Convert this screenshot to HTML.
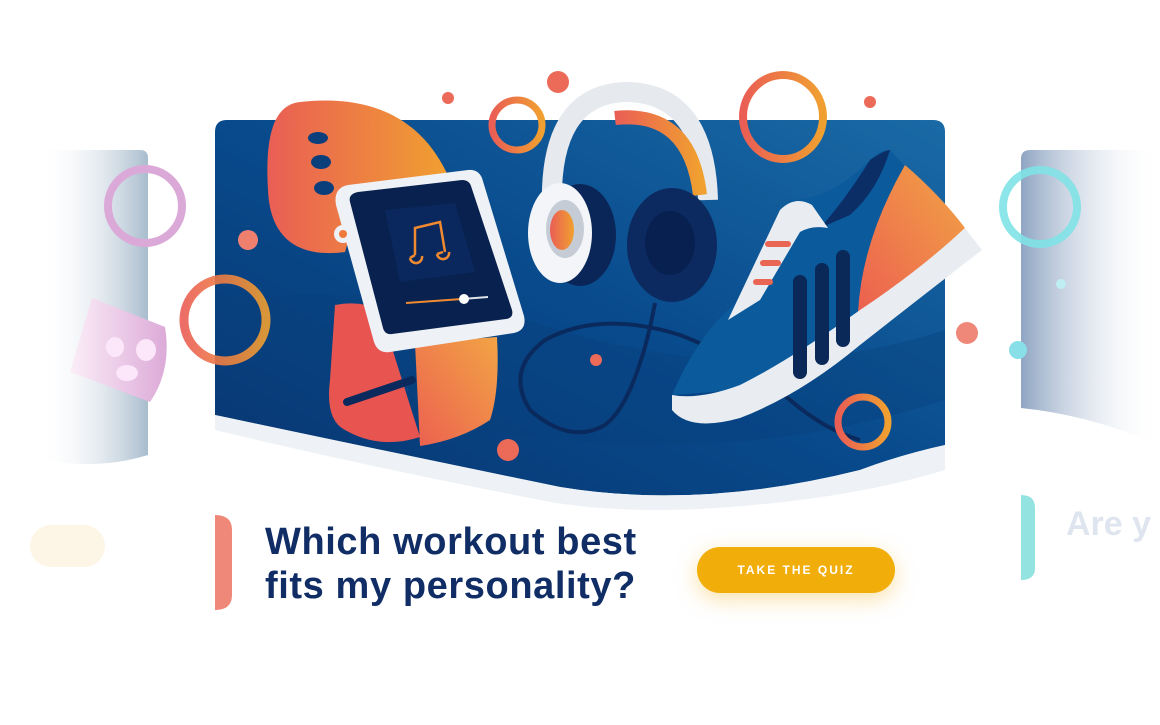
<!DOCTYPE html>
<html><head><meta charset="utf-8"><style>
html,body{margin:0;padding:0;background:#fff;width:1160px;height:725px;overflow:hidden}
svg{position:absolute;left:0;top:0}
.t{position:absolute;left:265px;top:520px;font:bold 38px/44px "Liberation Sans",sans-serif;color:#102d66;letter-spacing:0.6px}
.btn{position:absolute;left:697px;top:547px;width:198px;height:46px;border-radius:23px;background:#f1ad0a;box-shadow:0 6px 22px rgba(241,173,10,.35);color:#fff;font:bold 12px/46px "Liberation Sans",sans-serif;letter-spacing:2px;text-align:center}
.are{position:absolute;left:1066px;top:505px;font:bold 34px "Liberation Sans",sans-serif;color:#dfe5ef}
</style></head><body>
<svg width="1160" height="725" viewBox="0 0 1160 725">
<defs>
<linearGradient id="bg" x1="1" y1="0" x2="0" y2="1"><stop offset="0" stop-color="#1a6aa6"/><stop offset=".5" stop-color="#084a8c"/><stop offset="1" stop-color="#083570"/></linearGradient>
<linearGradient id="og" x1="0" y1="0" x2="1" y2="0"><stop offset="0" stop-color="#ea5e55"/><stop offset="1" stop-color="#f0a030"/></linearGradient>
<linearGradient id="og2" x1="0" y1="1" x2="1" y2="0"><stop offset="0" stop-color="#ec6050"/><stop offset="1" stop-color="#f2a445"/></linearGradient>
<linearGradient id="lg" x1="0" y1="0" x2="1" y2="0"><stop offset="0" stop-color="#fff" stop-opacity="0"/><stop offset="1" stop-color="#a8bccd"/></linearGradient>
<linearGradient id="rg" x1="0" y1="0" x2="1" y2="0"><stop offset="0" stop-color="#8fa5c3"/><stop offset="1" stop-color="#fff" stop-opacity="0"/></linearGradient>
<linearGradient id="pk" x1="0" y1="0" x2="1" y2="0"><stop offset="0" stop-color="#fbeef8"/><stop offset="1" stop-color="#dcaad8"/></linearGradient>
</defs>
<path d="M40,150 H140 Q148,150 148,158 V455 Q100,470 40,460 Z" fill="url(#lg)"/>
<circle cx="145" cy="206" r="37" fill="none" stroke="#dba9d8" stroke-width="8"/>
<path d="M92,298 L165,327 Q172,370 150,402 L70,372 Z" fill="url(#pk)"/>
<ellipse cx="115" cy="347" rx="9" ry="10" fill="#fbe6fa"/><ellipse cx="146" cy="350" rx="10" ry="11" fill="#fbe6fa"/><ellipse cx="127" cy="373" rx="11" ry="8" fill="#fbe6fa"/>
<rect x="30" y="525" width="75" height="42" rx="21" fill="#fdf6e6"/>
<path d="M1030,150 H1160 V445 Q1090,415 1021,408 V159 Q1021,150 1030,150 Z" fill="url(#rg)"/>
<circle cx="1040" cy="207" r="37" fill="none" stroke="#80e2e6" stroke-width="8" opacity=".9"/>
<circle cx="1061" cy="284" r="5" fill="#bfeef2"/>
<circle cx="1018" cy="350" r="9" fill="#88dfe8"/>
<path d="M1021,495 Q1035,495 1035,508 V568 Q1035,580 1021,580 Z" fill="#93e3e0"/>
<path d="M227,120 H933 Q945,120 945,132 V445 Q900,455 860,470 Q700,510 560,487 Q380,450 215,415 V132 Q215,120 227,120 Z" fill="url(#bg)"/>
<path d="M215,300 Q400,280 560,330 Q760,390 945,330 V400 Q760,460 560,440 Q380,420 215,360 Z" fill="#0a3f7c" opacity=".35"/>
<path d="M215,415 Q380,450 560,487 Q700,510 860,470 Q900,455 945,445 V470 Q880,490 800,500 Q640,520 540,500 Q360,465 215,430 Z" fill="#eef1f5"/>
<path d="M215,515 Q232,515 232,530 V595 Q232,610 215,610 Z" fill="#ef8878"/>
<circle cx="225" cy="320" r="41" fill="none" stroke="url(#og)" stroke-width="9" opacity=".9"/>
<circle cx="248" cy="240" r="10" fill="#ef8070"/>
<circle cx="448" cy="98" r="6" fill="#ec6a58"/>
<circle cx="558" cy="82" r="11" fill="#ec6a58"/>
<circle cx="517" cy="125" r="25" fill="none" stroke="url(#og)" stroke-width="7"/>
<ellipse cx="783" cy="117" rx="40" ry="42" fill="none" stroke="url(#og)" stroke-width="8"/>
<circle cx="870" cy="102" r="6" fill="#ec6a58"/>
<circle cx="967" cy="333" r="11" fill="#ef8878"/>
<circle cx="596" cy="360" r="6" fill="#ec6a58"/>
<circle cx="508" cy="450" r="11" fill="#ec6a58"/>
<path d="M655,303 Q648,340 640,363 Q625,410 605,425 Q570,445 530,410 Q505,370 545,340 Q600,310 680,335 Q740,358 790,400 Q825,430 860,440" fill="none" stroke="#0a2a5e" stroke-width="4"/>
<path d="M672,395 Q700,330 740,300 L790,200 Q830,200 870,160 Q880,150 890,150 L935,200 L960,228 L900,290 L820,345 L740,390 Z" fill="#0a5a9c"/>
<path d="M870,160 Q885,150 890,150 Q878,190 850,215 L820,228 Q845,200 870,160 Z" fill="#0c2e66"/>
<path d="M858,312 Q862,240 905,165 Q940,195 965,228 L920,270 Z" fill="url(#og2)"/>
<path d="M672,410 Q690,432 740,418 Q800,395 860,345 Q930,290 982,250 L965,228 Q920,270 860,310 Q790,360 740,385 Q700,400 672,395 Z" fill="#e9edf2"/>
<path d="M728,320 L780,210 Q795,195 812,205 L828,228 Q812,225 800,232 L760,300 Z" fill="#e9edf2"/>
<g stroke="#ea6654" stroke-width="6" stroke-linecap="round"><line x1="768" y1="244" x2="788" y2="244"/><line x1="763" y1="263" x2="778" y2="263"/><line x1="756" y1="282" x2="770" y2="282"/></g>
<g stroke="#0a2858" stroke-width="14" stroke-linecap="round"><line x1="800" y1="282" x2="800" y2="372"/><line x1="822" y1="270" x2="822" y2="358"/><line x1="843" y1="257" x2="843" y2="340"/></g>
<circle cx="863" cy="422" r="25" fill="none" stroke="url(#og)" stroke-width="7"/>
<path d="M552,210 Q548,95 625,92 Q705,92 708,200" fill="none" stroke="#e6eaef" stroke-width="20"/>
<path d="M615,118 Q690,110 700,195" fill="none" stroke="url(#og)" stroke-width="14"/>
<ellipse cx="580" cy="235" rx="36" ry="51" fill="#0a2558"/>
<ellipse cx="560" cy="233" rx="32" ry="50" fill="#f3f5f8"/>
<ellipse cx="565" cy="229" rx="19" ry="29" fill="#c5ccd6"/>
<ellipse cx="562" cy="230" rx="12" ry="20" fill="url(#og)"/>
<ellipse cx="672" cy="245" rx="45" ry="57" fill="#0c2a60"/>
<ellipse cx="670" cy="243" rx="25" ry="32" fill="#082050"/>
<path d="M300,102 C360,95 420,110 450,180 L360,200 L345,252 C300,258 270,240 268,190 C265,140 272,105 300,102 Z" fill="url(#og)"/>
<ellipse cx="318" cy="138" rx="10" ry="6" fill="#0a3f7c"/><ellipse cx="321" cy="162" rx="10" ry="7" fill="#0a3f7c"/><ellipse cx="324" cy="188" rx="10" ry="7" fill="#0a3f7c"/>
<path d="M335,305 Q360,300 380,310 L420,437 Q380,450 345,430 Q325,420 330,380 Z" fill="#e85450"/>
<path d="M415,343 L497,337 Q500,390 490,420 Q460,440 420,446 Z" fill="url(#og2)"/>
<line x1="347" y1="402" x2="412" y2="380" stroke="#0a2a5e" stroke-width="8" stroke-linecap="round"/>
<path d="M348,185 L468,170 Q478,169 482,178 L524,316 Q527,330 514,333 L390,352 Q378,354 374,342 L336,205 Q333,188 348,185 Z" fill="#eef1f5"/>
<circle cx="343" cy="234" r="9" fill="#eef1f5"/><circle cx="343" cy="234" r="4" fill="#ef7a3a"/>
<path d="M358,192 L462,180 Q469,180 471,186 L512,310 Q514,318 506,319 L392,334 Q385,335 383,328 L350,202 Q348,194 358,192 Z" fill="#08214f"/>
<path d="M385,210 L455,203 L475,272 L400,282 Z" fill="#0b2b60" opacity=".8"/>
<path d="M415,255 L415,228 L440,222 L445,252 M410,258 a6,6 0 1 0 12,-2 M437,254 a6,6 0 1 0 12,-2 M410,258 L415,255 M437,254 L443,252" fill="none" stroke="#f08a30" stroke-width="2.5"/>
<line x1="406" y1="303" x2="462" y2="299" stroke="#f08a30" stroke-width="2"/>
<line x1="462" y1="299" x2="488" y2="297" stroke="#dfe4ea" stroke-width="2"/>
<circle cx="464" cy="299" r="5" fill="#fff"/>
</svg>
<div class="t">Which workout best<br>fits my personality?</div>
<div class="btn">TAKE THE QUIZ</div>
<div class="are">Are y</div>
</body></html>
